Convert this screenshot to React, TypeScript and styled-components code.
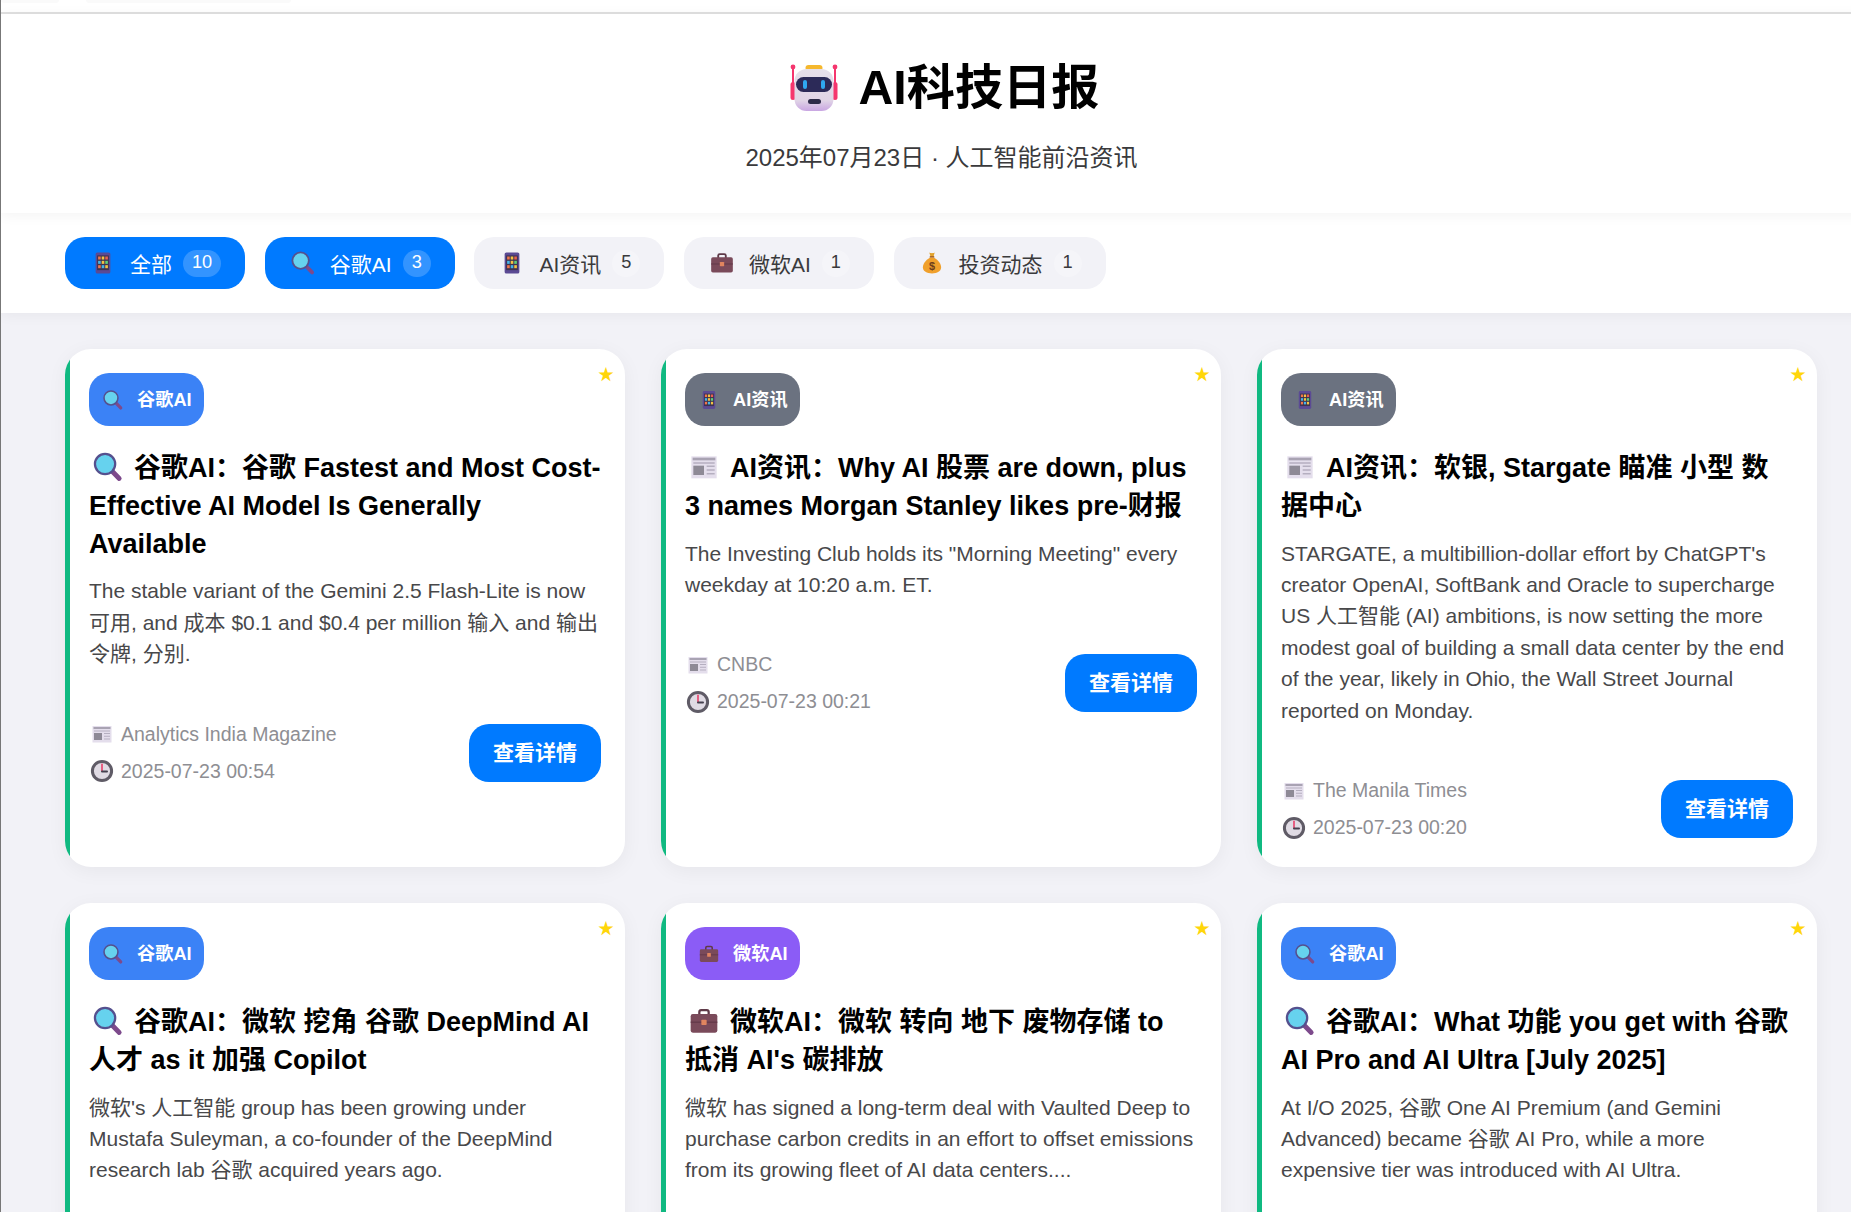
import React from "react";
import styled, { createGlobalStyle } from "styled-components";

const GlobalStyle = createGlobalStyle`
    html, body {
        margin: 0;
        padding: 0;
        height: 100%;
        overflow: hidden;
        background: #f2f2f7;
    }
    body {
        font-family: "Liberation Sans", "Noto Sans CJK SC", sans-serif;
    }
    * {
        box-sizing: border-box;
    }
`;

type IconName = "phone" | "search" | "news" | "clock" | "case" | "money";

const IconSvg = styled.svg<{ $size: number }>`
    width: ${p => p.$size}px;
    height: ${p => p.$size}px;
    flex: none;
`;

const Icon = ({ name, size, className }: { name: IconName; size: number; className?: string }) => {
    const cells = ["#f0764a", "#f5c342", "#e8604f", "#45b4e8", "#f5c342", "#5ecf7a", "#f0764a", "#45b4e8", "#f5c342"];
    return (
        <IconSvg $size={size} viewBox="0 0 24 24" className={className}>
            {name === "phone" && (
                <>
                    <rect x="5.2" y="2.2" width="13.6" height="19.6" rx="1.6" fill="#5b4a94" />
                    <rect x="6.6" y="5" width="10.8" height="13.6" fill="#3d3350" />
                    {cells.map((c, i) => (
                        <rect key={i} x={7.5 + (i % 3) * 3.3} y={6 + Math.floor(i / 3) * 4} width="2.4" height="2.8" fill={c} />
                    ))}
                </>
            )}
            {name === "search" && (
                <>
                    <path d="M14.6 14.6 20.4 20.6" stroke="#7d4a8c" strokeWidth="3.6" strokeLinecap="round" />
                    <circle cx="9.8" cy="9.8" r="7.6" fill="#66d2ee" stroke="#55508e" strokeWidth="1.7" />
                </>
            )}
            {name === "news" && (
                <>
                    <rect x="2.5" y="4" width="19" height="16.5" fill="#e4deec" />
                    <rect x="3.5" y="5" width="17" height="2" fill="#a9a3b3" />
                    <rect x="4" y="11" width="8" height="7" fill="#8e8a96" />
                    <path d="M4 9h16M14 11.5h6M14 14.2h6M14 17h6" stroke="#b5afc0" strokeWidth="1.1" />
                </>
            )}
            {name === "clock" && (
                <>
                    <circle cx="12" cy="12" r="9.6" fill="#e0dbe4" stroke="#5f5b66" strokeWidth="3" />
                    <path d="M12 12V5.4" stroke="#e8406a" strokeWidth="1.6" strokeLinecap="round" />
                    <path d="M12 12.6h5" stroke="#44404e" strokeWidth="2" strokeLinecap="round" />
                </>
            )}
            {name === "case" && (
                <>
                    <path d="M8.5 7.5V5.2c0-.8.6-1.4 1.4-1.4h4.2c.8 0 1.4.6 1.4 1.4v2.3" fill="none" stroke="#5f3a48" strokeWidth="1.7" />
                    <rect x="2" y="6.8" width="20" height="14" rx="1.6" fill="#7a4a5a" />
                    <rect x="2" y="12.4" width="20" height="1" fill="#643a4a" />
                    <rect x="10" y="11" width="4" height="4" rx=".6" fill="#e0855f" />
                </>
            )}
            {name === "money" && (
                <>
                    <path d="M9.5 2.4c1 .7 4 .7 5 0l-1.2 4h-2.6z" fill="#e2a32e" />
                    <rect x="9.8" y="5.6" width="4.4" height="1.6" rx=".8" fill="#a8652a" />
                    <path d="M10 7.2C6 9.4 3.6 13 3.6 16c0 3.8 3.6 5.6 8.4 5.6s8.4-1.8 8.4-5.6c0-3-2.4-6.6-6.4-8.8z" fill="#f0a02c" />
                    <text x="12" y="18.6" textAnchor="middle" fontSize="10" fontWeight="700" fill="#6e3f1c" fontFamily="Liberation Sans">$</text>
                </>
            )}
        </IconSvg>
    );
};

const Robot = () => (
    <svg width="60" height="60" viewBox="0 0 60 60">
        <defs>
            <linearGradient id="robotFace" x1="0" y1="0" x2="0" y2="1">
                <stop offset="0" stopColor="#e6e0ea" />
                <stop offset="0.75" stopColor="#e0d4e6" />
                <stop offset="1" stopColor="#c9a6e2" />
            </linearGradient>
        </defs>
        <path d="M9 10V38M51 10V38" stroke="#f5366e" strokeWidth="2" />
        <circle cx="9" cy="9" r="2.4" fill="#f5366e" />
        <circle cx="51" cy="9" r="2.4" fill="#f5366e" />
        <rect x="6.5" y="24" width="5" height="18" rx="2.5" fill="#f5366e" />
        <rect x="48.5" y="24" width="5" height="18" rx="2.5" fill="#f5366e" />
        <rect x="21.5" y="7" width="17" height="6" rx="3" fill="#f5b82e" />
        <rect x="10.5" y="11" width="39" height="42" rx="12" fill="url(#robotFace)" />
        <rect x="12" y="19" width="36" height="15" rx="7.5" fill="#2c2a58" />
        <rect x="19" y="22" width="4" height="9" rx="2" fill="#2fa8f0" />
        <rect x="37" y="22" width="4" height="9" rx="2" fill="#2fa8f0" />
        <rect x="24" y="41" width="13" height="5" rx="2.5" fill="#2c2a48" />
    </svg>
);

const Page = styled.div`
    width: 1882px;
    height: 1212px;
    overflow: hidden;
    border-left: 1px solid #777;
    display: flex;
    flex-direction: column;
    background: #f2f2f7;
`;

const TopStrip = styled.div`
    height: 14px;
    flex: none;
    background: #fff;
    border-bottom: 2px solid #e0e0e0;
    display: flex;
    gap: 27px;
`;

const GhostTab = styled.div<{ $width: number }>`
    width: ${p => p.$width}px;
    height: 3px;
    background: #fafafa;
    border-radius: 0 0 8px 8px;
`;

const Header = styled.header`
    flex: none;
    height: 199px;
    background: #fff;
    position: relative;
    z-index: 2;
    box-shadow: 0 2px 13px rgba(0, 0, 0, 0.05);
    display: flex;
    flex-direction: column;
    align-items: center;
    padding-top: 44px;
`;

const Title = styled.h1`
    margin: 0;
    height: 60px;
    display: flex;
    align-items: center;
    gap: 15px;
    font-size: 48.2px;
    font-weight: 700;
    color: #000;
`;

const TitleText = styled.span`
    padding-bottom: 10px;
`;

const Subtitle = styled.p`
    margin: 22px 0 0;
    font-size: 24px;
    line-height: 36px;
    color: #3a3a3c;
`;

const FilterBar = styled.nav`
    flex: none;
    height: 100px;
    background: #fff;
    position: relative;
    z-index: 1;
    box-shadow: 0 2px 13px rgba(0, 0, 0, 0.05);
    padding: 24px 64px;
    display: flex;
    gap: 19.6px;
`;

const Tab = styled.button<{ $active?: boolean }>`
    height: 52px;
    border: none;
    border-radius: 20px;
    padding: 0 24px 0 25px;
    display: flex;
    align-items: center;
    font-family: inherit;
    font-size: 21px;
    background: ${p => (p.$active ? "#007aff" : "#f2f2f7")};
    color: ${p => (p.$active ? "#fff" : "#3a3a3c")};
`;

const TabLabel = styled.span`
    margin-left: 14px;
`;

const Count = styled.span<{ $active?: boolean }>`
    margin-left: 11px;
    height: 27px;
    min-width: 28px;
    padding: 0 9px;
    border-radius: 14px;
    font-size: 18.2px;
    line-height: 25px;
    text-align: center;
    background: ${p => (p.$active ? "rgba(255, 255, 255, 0.2)" : "rgba(255, 255, 255, 0.25)")};
`;

const Grid = styled.main`
    padding: 36px 64px 0;
    display: grid;
    grid-template-columns: repeat(3, 560px);
    grid-auto-rows: minmax(400px, auto);
    gap: 36px;
`;

const Card = styled.article`
    position: relative;
    overflow: hidden;
    background: #fff;
    border-radius: 26px;
    box-shadow: 0 4px 20px rgba(0, 0, 0, 0.05);
    padding: 24px 24px 25px 24px;

    &::before {
        content: "";
        position: absolute;
        left: 0;
        top: 0;
        bottom: 0;
        width: 5px;
        background: #10b981;
    }
`;

const Star = styled.span`
    position: absolute;
    top: 14px;
    right: 11px;
    font-size: 16px;
    line-height: 24px;
    color: #ffd60a;
`;

const Badge = styled.span<{ $color: string }>`
    display: inline-flex;
    align-items: center;
    height: 53px;
    padding: 0 12px 0 13px;
    border-radius: 20px;
    background: ${p => p.$color};
    color: #fff;
    font-size: 18.2px;
    font-weight: 700;
`;

const BadgeLabel = styled.span`
    margin-left: 13px;
    padding-bottom: 4px;
`;

const CardTitle = styled.h3`
    margin: 24px 0 12px;
    font-size: 27px;
    line-height: 37.8px;
    font-weight: 700;
    color: #000;
`;

const TitleIcon = styled(Icon)`
    vertical-align: -6px;
    margin: 0 10px 0 3px;
`;

const Desc = styled.p`
    margin: 0 0 50px;
    font-size: 21px;
    line-height: 31.4px;
    color: #48484a;
`;

const Footer = styled.footer`
    display: flex;
    align-items: center;
    justify-content: space-between;
`;

const Meta = styled.div`
    display: flex;
    flex-direction: column;
    gap: 8px;
    padding-left: 1px;
`;

const MetaRow = styled.div`
    display: flex;
    align-items: center;
    gap: 7px;
    font-size: 19.5px;
    line-height: 29px;
    color: #8e8e93;
`;

const DetailButton = styled.button`
    height: 58px;
    padding: 0 24px 4px;
    border: none;
    border-radius: 20px;
    background: #007aff;
    color: #fff;
    font-family: inherit;
    font-size: 21px;
    font-weight: 700;
`;

const tabs: { icon: IconName; label: string; count: number; active?: boolean }[] = [
    { icon: "phone", label: "全部", count: 10, active: true },
    { icon: "search", label: "谷歌AI", count: 3, active: true },
    { icon: "phone", label: "AI资讯", count: 5 },
    { icon: "case", label: "微软AI", count: 1 },
    { icon: "money", label: "投资动态", count: 1 },
];

type Article = {
    badge: string;
    badgeIcon: IconName;
    color: string;
    titleIcon: IconName;
    title: string;
    desc: string;
    source?: string;
    time?: string;
};

const BLUE = "#3b82f6";
const GRAY = "#6b7280";
const PURPLE = "#8b5cf6";

const articles: Article[] = [
    {
        badge: "谷歌AI", badgeIcon: "search", color: BLUE, titleIcon: "search",
        title: "谷歌AI：谷歌 Fastest and Most Cost-Effective AI Model Is Generally Available",
        desc: "The stable variant of the Gemini 2.5 Flash-Lite is now 可用, and 成本 $0.1 and $0.4 per million 输入 and 输出 令牌, 分别.",
        source: "Analytics India Magazine", time: "2025-07-23 00:54",
    },
    {
        badge: "AI资讯", badgeIcon: "phone", color: GRAY, titleIcon: "news",
        title: "AI资讯：Why AI 股票 are down, plus 3 names Morgan Stanley likes pre-财报",
        desc: "The Investing Club holds its \"Morning Meeting\" every weekday at 10:20 a.m. ET.",
        source: "CNBC", time: "2025-07-23 00:21",
    },
    {
        badge: "AI资讯", badgeIcon: "phone", color: GRAY, titleIcon: "news",
        title: "AI资讯：软银, Stargate 瞄准 小型 数据中心",
        desc: "STARGATE, a multibillion-dollar effort by ChatGPT's creator OpenAI, SoftBank and Oracle to supercharge US 人工智能 (AI) ambitions, is now setting the more modest goal of building a small data center by the end of the year, likely in Ohio, the Wall Street Journal reported on Monday.",
        source: "The Manila Times", time: "2025-07-23 00:20",
    },
    {
        badge: "谷歌AI", badgeIcon: "search", color: BLUE, titleIcon: "search",
        title: "谷歌AI：微软 挖角 谷歌 DeepMind AI 人才 as it 加强 Copilot",
        desc: "微软's 人工智能 group has been growing under Mustafa Suleyman, a co-founder of the DeepMind research lab 谷歌 acquired years ago.",
    },
    {
        badge: "微软AI", badgeIcon: "case", color: PURPLE, titleIcon: "case",
        title: "微软AI：微软 转向 地下 废物存储 to 抵消 AI's 碳排放",
        desc: "微软 has signed a long-term deal with Vaulted Deep to purchase carbon credits in an effort to offset emissions from its growing fleet of AI data centers....",
    },
    {
        badge: "谷歌AI", badgeIcon: "search", color: BLUE, titleIcon: "search",
        title: "谷歌AI：What 功能 you get with 谷歌 AI Pro and AI Ultra [July 2025]",
        desc: "At I/O 2025, 谷歌 One AI Premium (and Gemini Advanced) became 谷歌 AI Pro, while a more expensive tier was introduced with AI Ultra.",
    },
];

const App = () => {
    return (
        <Page>
            <GlobalStyle />
            <TopStrip>
                <GhostTab $width={58} />
                <GhostTab $width={205} />
            </TopStrip>
            <Header>
                <Title>
                    <Robot />
                    <TitleText>AI科技日报</TitleText>
                </Title>
                <Subtitle>2025年07月23日 · 人工智能前沿资讯</Subtitle>
            </Header>
            <FilterBar>
                {tabs.map(tab => (
                    <Tab key={tab.label} $active={tab.active}>
                        <Icon name={tab.icon} size={26} />
                        <TabLabel>{tab.label}</TabLabel>
                        <Count $active={tab.active}>{tab.count}</Count>
                    </Tab>
                ))}
            </FilterBar>
            <Grid>
                {articles.map(article => (
                    <Card key={article.title}>
                        <Star>★</Star>
                        <Badge $color={article.color}>
                            <Icon name={article.badgeIcon} size={22} />
                            <BadgeLabel>{article.badge}</BadgeLabel>
                        </Badge>
                        <CardTitle>
                            <TitleIcon name={article.titleIcon} size={32} />
                            {article.title}
                        </CardTitle>
                        <Desc>{article.desc}</Desc>
                        {article.source && (
                            <Footer>
                                <Meta>
                                    <MetaRow><Icon name="news" size={24} />{article.source}</MetaRow>
                                    <MetaRow><Icon name="clock" size={24} />{article.time}</MetaRow>
                                </Meta>
                                <DetailButton>查看详情</DetailButton>
                            </Footer>
                        )}
                    </Card>
                ))}
            </Grid>
        </Page>
    );
};

export default App;
